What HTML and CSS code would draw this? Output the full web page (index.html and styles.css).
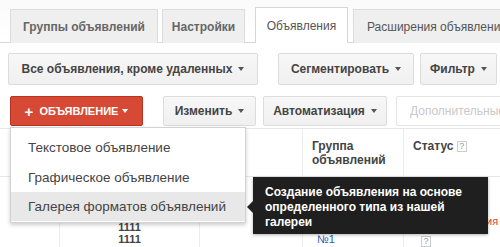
FILE: index.html
```html
<!DOCTYPE html>
<html>
<head>
<meta charset="utf-8">
<link rel="stylesheet" href="styles.css">
</head>
<body>
<div class="page">
  <div class="tabs">
    <div class="tab t1">Группы объявлений</div>
    <div class="tab t2">Настройки</div>
    <div class="tab active t3">Объявления</div>
    <div class="tab t4">Расширения объявлений</div>
  </div>
  <div class="toolbar tb1">
    <div class="btn b-all">Все объявления, кроме удаленных <span class="caret"></span></div>
    <div class="btn b-seg">Сегментировать <span class="caret"></span></div>
    <div class="btn b-fil">Фильтр <span class="caret"></span></div>
  </div>
  <div class="toolbar tb2">
    <div class="btn red"><span class="plus">+</span> ОБЪЯВЛЕНИЕ <span class="caret white"></span></div>
    <div class="btn b-edit">Изменить <span class="caret"></span></div>
    <div class="btn b-auto">Автоматизация <span class="caret"></span></div>
    <div class="btn disabled">Дополнительные действия</div>
  </div>
  <div class="table">
    <div class="cell"></div>
    <div class="cell"></div>
    <div class="cell"></div>
    <div class="cell head">Группа<br>объявлений</div>
    <div class="cell head">Статус <span class="q">?</span></div>
    <div class="cell"></div>
    <div class="cell nums">1111<br>1111</div>
    <div class="cell"></div>
    <div class="cell link">№1</div>
    <div class="cell stat"><span class="q small">?</span><span class="rej">ия</span></div>
  </div>

  <div class="menu">
    <div class="item">Текстовое объявление</div>
    <div class="item">Графическое объявление</div>
    <div class="item hover">Галерея форматов объявлений</div>
  </div>
  <div class="tip">Создание объявления на основе определенного типа из нашей галереи</div>
</div>
</body>
</html>
```
FILE: styles.css
```css
* { box-sizing: border-box; }
html, body { margin: 0; padding: 0; }
body {
  width: 500px;
  height: 247px;
  overflow: hidden;
  background: #fff;
  font-family: "Liberation Sans", Arial, sans-serif;
  color: #444;
}
.page { position: relative; width: 500px; height: 247px; overflow: hidden; }

.tabs {
  display: flex;
  align-items: flex-end;
  height: 43px;
  padding-left: 10px;
  gap: 4px;
  border-bottom: 1px solid #d6d6d6;
  background: linear-gradient(#fafafa, #fff);
}
.tab {
  flex-shrink: 0;
  height: 34px;
  display: flex;
  align-items: center;
  justify-content: center;
  font-size: 12px;
  font-weight: bold;
  color: #666;
  background: #efefef;
  border: 1px solid #dcdcdc;
  border-bottom: none;
  white-space: nowrap;
  margin-bottom: -1px;
}
.t1 { width: 148px; }
.t2 { width: 83px; }
.t3 { width: 93px; margin-left: 6px; height: 36px; background: #fff; border-color: #d6d6d6; font-weight: normal; color: #555; }
.t4 { width: 160px; margin-left: 1px; justify-content: flex-start; padding-left: 13px; font-weight: normal; color: #555; }

.toolbar { display: flex; align-items: center; }
.tb1 { margin-top: 10px; padding-left: 8px; height: 32px; }
.tb2 { margin-top: 11px; padding-left: 10px; height: 30px; }

.btn {
  flex-shrink: 0;
  height: 100%;
  display: flex;
  align-items: center;
  justify-content: center;
  gap: 6px;
  font-size: 12px;
  font-weight: bold;
  color: #444;
  background: linear-gradient(#f7f7f7, #f0f0f0);
  border: 1px solid #dcdcdc;
  border-radius: 2px;
  white-space: nowrap;
}
.caret {
  display: inline-block;
  width: 0; height: 0;
  border-left: 3.5px solid transparent;
  border-right: 3.5px solid transparent;
  border-top: 4px solid #555;
}
.caret.white { border-top-color: #fff; }
.b-all { width: 250px; }
.b-seg { width: 136px; margin-left: 20px; }
.b-fil { width: 77px; margin-left: 6px; }

.red {
  width: 133px;
  background: #d64a35;
  border-color: #b8321f;
  color: #fff;
  font-size: 11px;
  gap: 4px;
}
.plus { font-size: 15px; font-weight: bold; margin-right: 2px; line-height: 1; }
.b-edit { width: 93px; margin-left: 20px; }
.b-auto { width: 124px; margin-left: 7px; }
.disabled {
  width: 130px;
  margin-left: 9px;
  background: #fff;
  color: #c8c8c8;
  font-weight: normal;
  justify-content: flex-start;
  padding-left: 13px;
  border-color: #e4e4e4;
  overflow: hidden;
}

.table {
  margin-top: 2px;
  display: grid;
  grid-template-columns: 60px 140px 103px 101px 96px;
  grid-template-rows: 48px 80px;
  border-top: 1px solid #e6e6e6;
}
.cell {
  border-right: 1px solid #ececec;
  border-bottom: 1px solid #e6e6e6;
  font-size: 11px;
}
.cell:nth-child(5n) { border-right: none; }
.head {
  font-weight: bold;
  color: #444;
  padding: 10px 0 0 9px;
  line-height: 14px;
  font-size: 12px;
}
.q {
  display: inline-block;
  width: 10px; height: 11px;
  border: 1px solid #ccc;
  font-size: 9px;
  color: #999;
  text-align: center;
  line-height: 9px;
  font-weight: normal;
  vertical-align: 1px;
}
.nums {
  text-align: center;
  padding-top: 44px;
  font-size: 11px;
  line-height: 12px;
  color: #444;
  font-weight: bold;
}
.link {
  color: #2a5db0;
  padding: 56px 0 0 14px;
  font-size: 11px;
}
.stat { position: relative; padding: 58px 0 0 17px; }
.rej { position: absolute; left: 82px; top: 38px; color: #d6452e; font-size: 11px; }

.menu {
  position: absolute;
  left: 10px;
  top: 127px;
  width: 236px;
  height: 96px;
  background: #fff;
  border: 1px solid #d2d2d2;
  box-shadow: 0 2px 4px rgba(0,0,0,0.2);
  padding-top: 4px;
}
.item {
  height: 30px;
  display: flex;
  align-items: center;
  padding-left: 17px;
  font-size: 13.5px;
  color: #444;
}
.item.hover { background: #e8e8e8; height: 29px; }

.tip {
  position: absolute;
  left: 253px;
  top: 177px;
  width: 235px;
  height: 57px;
  background: #1f1f1f;
  color: #fff;
  font-size: 12px;
  font-weight: bold;
  line-height: 15px;
  padding: 8px 18px 0 12px;
  box-shadow: 0 1px 3px rgba(0,0,0,0.3);
}
.tip::before {
  content: "";
  position: absolute;
  left: -6px;
  top: 24px;
  border-top: 6px solid transparent;
  border-bottom: 6px solid transparent;
  border-right: 6px solid #1f1f1f;
}
```
